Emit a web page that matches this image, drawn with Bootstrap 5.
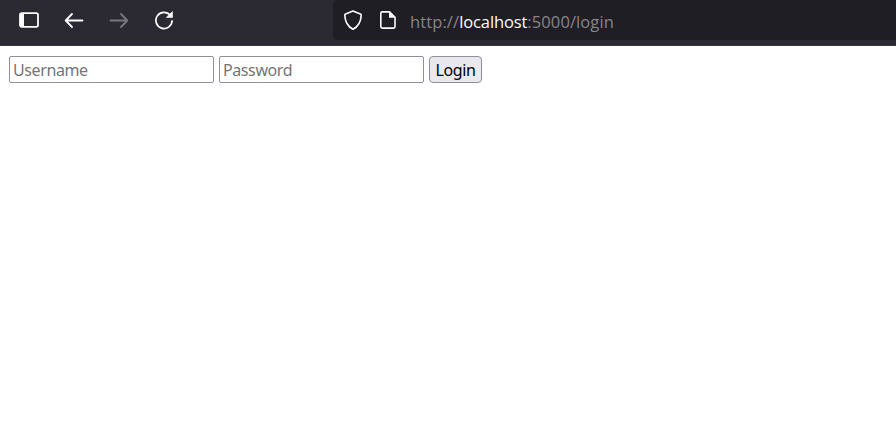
<!DOCTYPE html>
<html lang="en">
<head>
<meta charset="utf-8">
<title>Login</title>
<link href="https://cdn.jsdelivr.net/npm/bootstrap@5.3.0/dist/css/bootstrap.min.css" rel="stylesheet">
<style>
body{font-family:"Noto Sans","Open Sans",sans-serif;background:#fff;overflow:hidden}
.toolbar{height:46px;background:#2b2a33;border-bottom:1px solid #38373f}
.tools{width:333px;height:40px;padding-left:19px;gap:25px}
.tools svg,.address svg{display:block;flex:none}
.address{height:40px;background:#1f1e25;border-radius:4px 0 0 4px;padding-left:10px}
.url{font-family:"Open Sans","Noto Sans",sans-serif;font-size:16.5px;line-height:24px;color:#85858a;margin:3px 0 0 13px;white-space:nowrap;letter-spacing:.1px}
.url b{font-weight:400;color:#fbfbfe;letter-spacing:-.1px}
.login-form{padding:10px 9px;gap:5px}
.login-form .form-control{width:205px;height:27px;border:1px solid #8f8f9d;border-radius:2px;padding:0 3px;font-size:16px;line-height:25px;letter-spacing:-.4px;color:#000}
.login-form .form-control::placeholder{color:#757575;opacity:1}
.login-form .btn{width:53px;height:27px;background:#e9e9ed;border:1px solid #8f8f9d;border-radius:4px;padding:1px 0 0;font-size:16px;line-height:24px;letter-spacing:-.4px;color:#000}
</style>
<script src="https://cdn.jsdelivr.net/npm/bootstrap@5.3.0/dist/js/bootstrap.bundle.min.js"></script>
</head>
<body>
<header class="toolbar d-flex align-items-start">
  <nav class="tools d-flex align-items-center flex-shrink-0" aria-label="Navigation">
    <svg width="20" height="20" viewBox="0 0 20 20"><rect x="1" y="3.200" width="18" height="13.600" rx="1.800" fill="none" stroke="#fbfbfe" stroke-width="1.800"/><path d="M1 4q0-1 1-1h3v14H2q-1 0-1-1z" fill="#fbfbfe"/></svg>
    <svg width="20" height="20" viewBox="0 0 20 20" fill="none" stroke="#fbfbfe" stroke-width="1.800" stroke-linecap="round" stroke-linejoin="round"><path d="M18.500 10.500H2M8 4l-6.300 6.500L8 17"/></svg>
    <svg width="20" height="20" viewBox="0 0 20 20" fill="none" stroke="#77767d" stroke-width="1.800" stroke-linecap="round" stroke-linejoin="round"><path d="M1.500 10.500H18M12 4l6.300 6.500L12 17"/></svg>
    <svg width="20" height="20" viewBox="0 0 20 20"><path d="M16.200 5.200A8.100 8.100 0 1 0 18.100 10.800" fill="none" stroke="#fbfbfe" stroke-width="1.700" stroke-linecap="round"/><path d="M18.500 1.600v5.800h-6.200z" fill="#fbfbfe" stroke="#fbfbfe" stroke-width=".6" stroke-linejoin="round"/></svg>
  </nav>
  <div class="address d-flex align-items-center flex-grow-1">
    <svg width="20" height="22" viewBox="0 0 20 22"><path d="M10 2 17.400 5Q18.300 5.400 18.200 6.400C17.900 12.500 15.500 17.500 10 20.200C4.500 17.500 2.100 12.500 1.800 6.400Q1.700 5.400 2.600 5Z" fill="none" stroke="#fbfbfe" stroke-width="1.600" stroke-linejoin="round"/></svg>
    <svg class="ms-3" width="18" height="20" viewBox="0 0 18 20"><path d="M3.300 1.900H10.500L16 7.400V16.600Q16 18.100 14.500 18.100H3.300Q1.800 18.100 1.800 16.600V3.400Q1.800 1.900 3.300 1.900Z" fill="none" stroke="#fbfbfe" stroke-width="1.600" stroke-linejoin="round"/><path d="M10 1.500V7.800H16.300Z" fill="#fbfbfe"/></svg>
    <div class="url">http://<b>localhost</b>:5000/login</div>
  </div>
</header>
<main>
  <form class="login-form d-flex align-items-center" onsubmit="return false">
    <input class="form-control" type="text" placeholder="Username" aria-label="Username">
    <input class="form-control" type="password" placeholder="Password" aria-label="Password">
    <button class="btn" type="submit">Login</button>
  </form>
</main>
</body>
</html>
